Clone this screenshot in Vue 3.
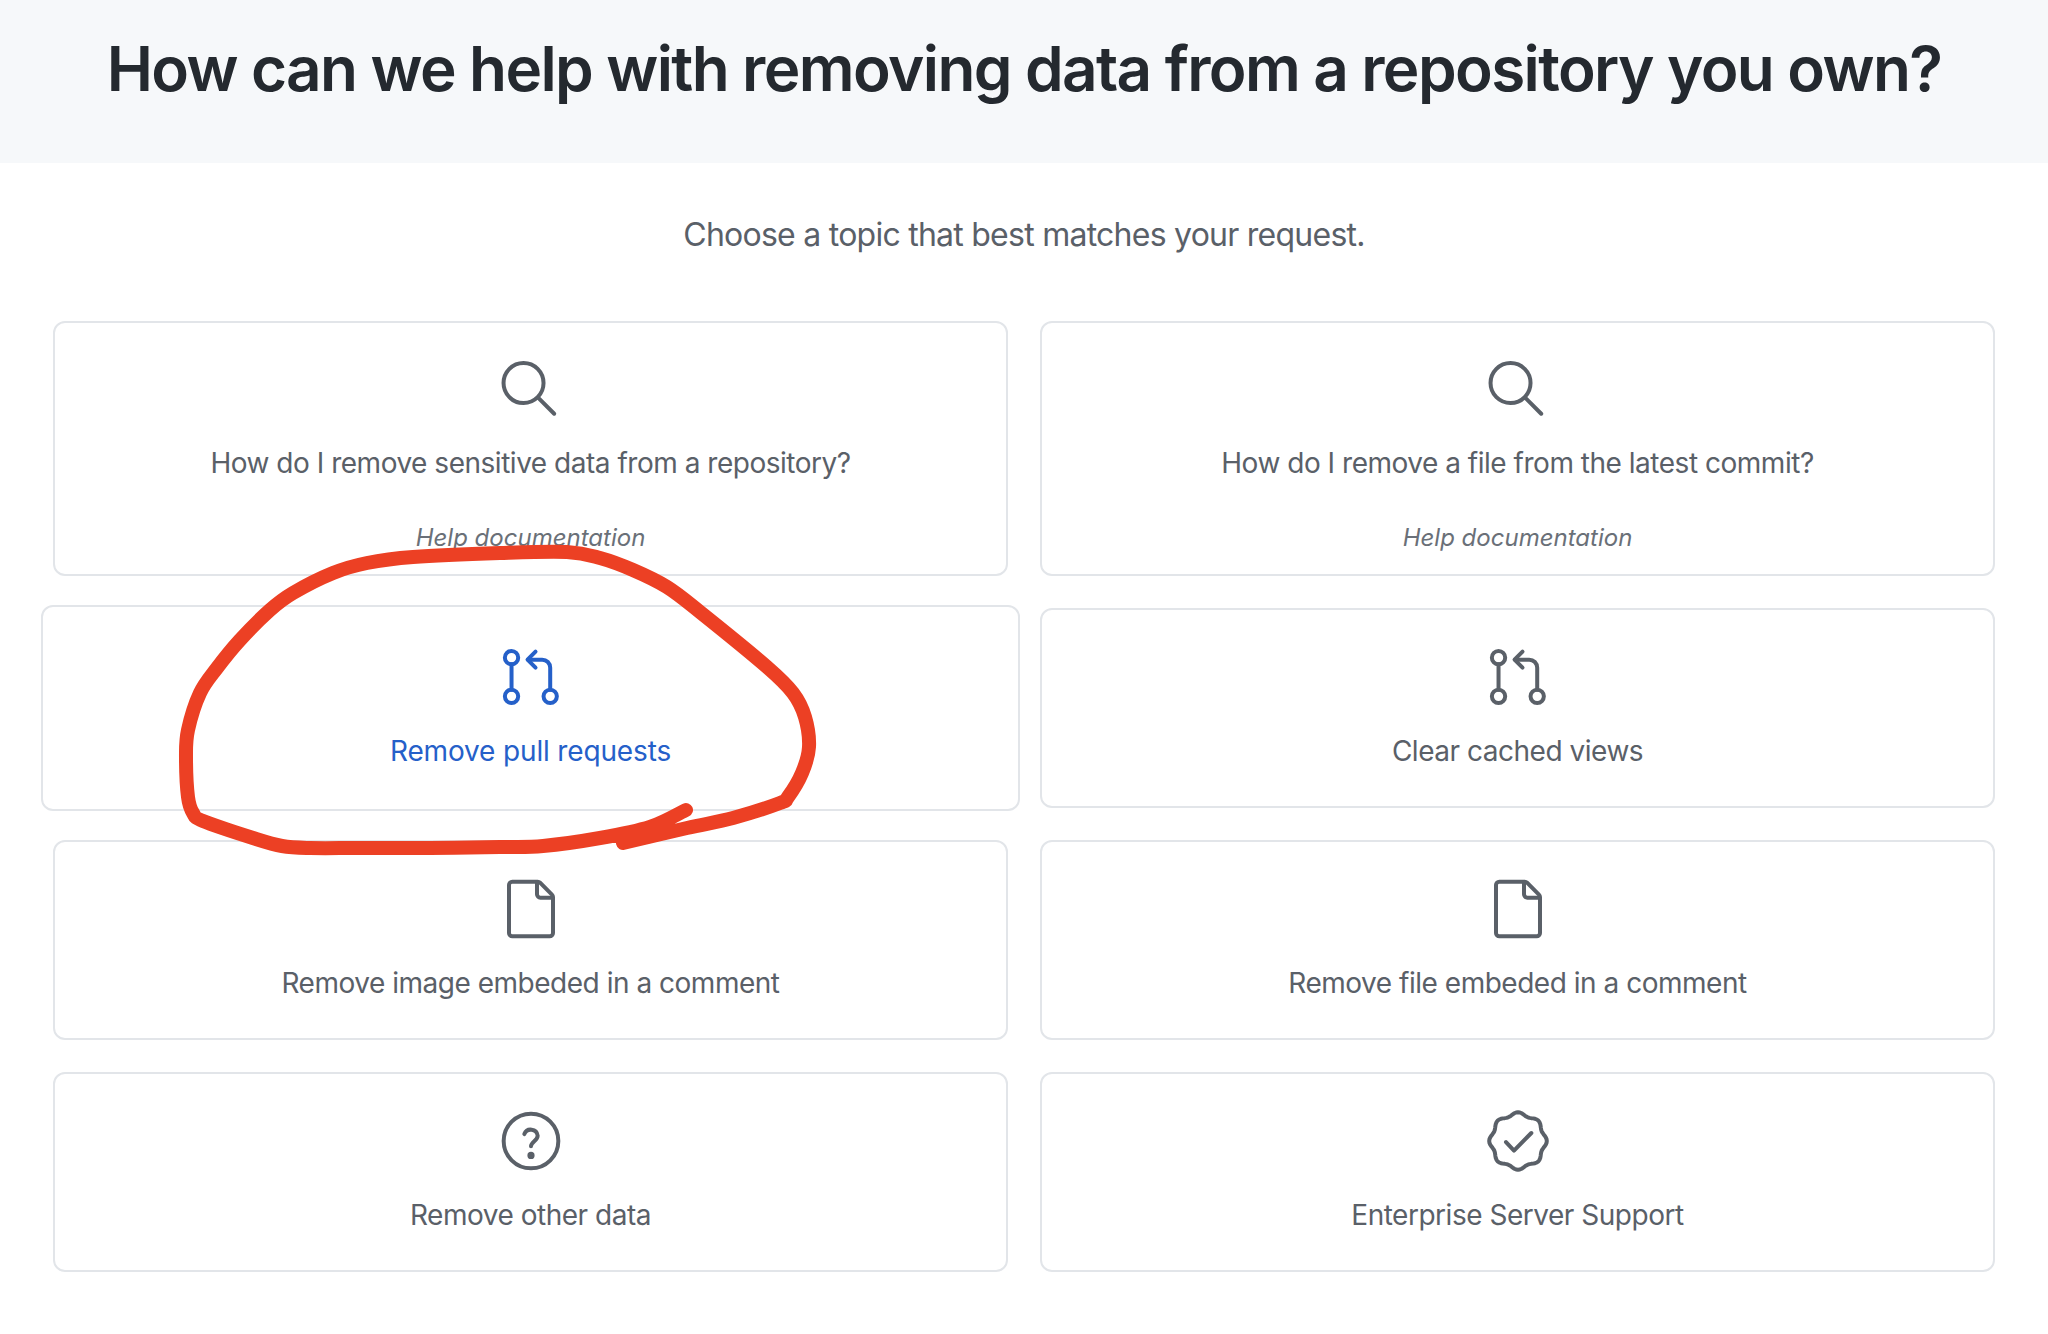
<template>
  <div class="page">
    <header class="head">
      <h1>How can we help with removing data from a repository you own?</h1>
    </header>
    <main class="body">
      <p class="lead">Choose a topic that best matches your request.</p>
      <div class="cards">
        <a v-for="c in cards" :key="c.title" class="card" :class="{ hover: c.hover, tall: c.note }">
          <svg class="icon" viewBox="0 0 24 24" fill="none" stroke="currentColor" stroke-width="1.5" stroke-linecap="round" stroke-linejoin="round">
            <template v-if="c.icon === 'search'">
              <circle cx="9.2" cy="9.4" r="7.5" />
              <path d="M14.75 14.95l5.95 5.95" />
            </template>
            <template v-else-if="c.icon === 'pr'">
              <circle cx="4.7" cy="4.75" r="2.5" />
              <circle cx="4.7" cy="19.25" r="2.5" />
              <circle cx="19.2" cy="19.25" r="2.5" />
              <path d="M4.7 7.25v9.5M19.2 16.75V8.5a3 3 0 0 0-3-3h-5.25" />
              <path d="M13.7 2.5l-3 3 3 3" />
            </template>
            <template v-else-if="c.icon === 'file'">
              <path d="M5 1.75h9.5a1.3 1.3 0 0 1 .9.4l4.45 4.45a1.3 1.3 0 0 1 .4.9V21a1.25 1.25 0 0 1-1.25 1.25H5A1.25 1.25 0 0 1 3.75 21V3A1.25 1.25 0 0 1 5 1.75Z" />
              <path d="M14.25 2v4.5a1.25 1.25 0 0 0 1.25 1.25H20" />
            </template>
            <template v-else-if="c.icon === 'help'">
              <circle cx="12" cy="12" r="10.25" />
              <path d="M9.5 9.4a2.6 2.6 0 0 1 5 .6c0 1.8-2.5 2.3-2.5 4" />
              <circle cx="12" cy="17.4" r=".6" fill="currentColor" />
            </template>
            <template v-else>
              <path :d="badge" />
              <path d="M7.5 12.4l3 3.2 6.5-6.6" />
            </template>
          </svg>
          <span class="title">{{ c.title }}</span>
          <em v-if="c.note" class="note">{{ c.note }}</em>
        </a>
      </div>
    </main>
    <svg class="scribble" viewBox="0 0 2048 1334" fill="none" stroke="#ec4024" stroke-width="14" stroke-linecap="round" stroke-linejoin="round">
      <path :d="scribble" />
    </svg>
  </div>
</template>

<script setup>
const cards = [
  { icon: 'search', title: 'How do I remove sensitive data from a repository?', note: 'Help documentation' },
  { icon: 'search', title: 'How do I remove a file from the latest commit?', note: 'Help documentation' },
  { icon: 'pr', title: 'Remove pull requests', hover: true },
  { icon: 'pr', title: 'Clear cached views' },
  { icon: 'file', title: 'Remove image embeded in a comment' },
  { icon: 'file', title: 'Remove file embeded in a comment' },
  { icon: 'help', title: 'Remove other data' },
  { icon: 'badge', title: 'Enterprise Server Support' },
]

// wavy outline of the verified badge
const badgePts = []
for (let i = 0; i < 96; i++) {
  const a = (i / 96) * Math.PI * 2
  const r = 10.2 + 0.6 * Math.cos(8 * a)
  badgePts.push(`${(12 + r * Math.sin(a)).toFixed(2)} ${(12 - r * Math.cos(a)).toFixed(2)}`)
}
const badge = 'M' + badgePts.join('L') + 'Z'

// hand drawn loop, catmull-rom through the points
const pts = [
  [686, 810], [650, 827], [600, 838], [543, 846], [500, 847], [430, 848], [360, 848], [310, 848], [282, 846],
  [253, 838], [203, 821], [193, 813], [188, 797], [186, 757], [188, 730], [200, 693], [217, 668], [240, 640],
  [270, 610], [293, 593], [333, 573], [367, 563], [413, 557], [500, 553], [567, 552], [600, 558], [633, 570],
  [667, 587], [700, 612], [767, 667], [793, 693], [805, 717], [809, 747], [802, 773], [788, 797],
  [780, 803], [733, 818], [687, 828], [623, 843],
]
let d = `M${pts[0][0]} ${pts[0][1]}`
for (let i = 0; i < pts.length - 1; i++) {
  const p0 = pts[i - 1] || pts[i]
  const p1 = pts[i]
  const p2 = pts[i + 1]
  const p3 = pts[i + 2] || p2
  const c1x = p1[0] + (p2[0] - p0[0]) / 6
  const c1y = p1[1] + (p2[1] - p0[1]) / 6
  const c2x = p2[0] - (p3[0] - p1[0]) / 6
  const c2y = p2[1] - (p3[1] - p1[1]) / 6
  d += `C${c1x} ${c1y} ${c2x} ${c2y} ${p2[0]} ${p2[1]}`
}
const scribble = d
</script>

<style>
body {
  background: #fff;
}
</style>

<style scoped>
.page {
  position: relative;
  width: 2048px;
  height: 1334px;
  overflow: hidden;
  background: #fff;
  font-family: Inter, "Liberation Sans", sans-serif;
  color: #5a6068;
}
.head {
  height: 163px;
  background: #f6f8fa;
  display: flex;
  justify-content: center;
  padding-top: 29px;
  box-sizing: border-box;
}
.head h1 {
  margin: 0;
  font-size: 62px;
  line-height: 80px;
  font-weight: 600;
  letter-spacing: -1.6px;
  color: #24292f;
  white-space: nowrap;
}
.body {
  padding: 50px 53px 0;
}
.lead {
  margin: 0 0 64px;
  text-align: center;
  font-size: 32px;
  line-height: 44px;
  letter-spacing: -0.75px;
}
.cards {
  display: grid;
  grid-template-columns: 1fr 1fr;
  gap: 32px;
}
.card {
  display: flex;
  flex-direction: column;
  align-items: center;
  height: 200px;
  box-sizing: border-box;
  padding-top: 35px;
  background: #fff;
  border: 2px solid #e2e5e9;
  border-radius: 12px;
}
.card.tall {
  height: 255px;
}
.card.hover {
  height: 206px;
  margin: -3px -12px;
  padding-top: 38px;
  color: #2560c9;
}
.icon {
  width: 64px;
  height: 64px;
}
.title {
  margin-top: 22px;
  font-size: 28px;
  line-height: 40px;
  letter-spacing: -0.48px;
}
.hover .title {
  letter-spacing: -0.15px;
}
.tall .title {
  margin-top: 21px;
}
.note {
  margin-top: 38px;
  font-size: 24px;
  line-height: 34px;
  color: #6a7078;
}
.scribble {
  position: absolute;
  left: 0;
  top: 0;
  width: 2048px;
  height: 1334px;
  pointer-events: none;
}
</style>
